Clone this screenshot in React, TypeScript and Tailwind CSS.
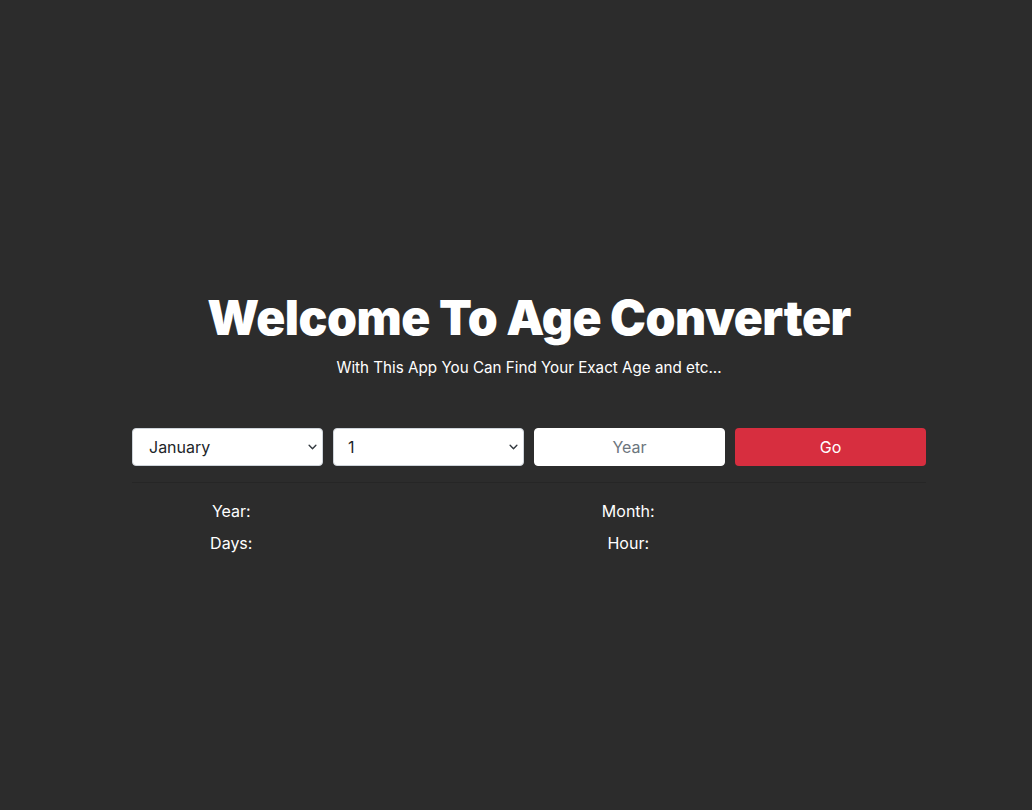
import React from "react";

const months = ["January","February","March","April","May","June","July","August","September","October","November","December"];

function Chevron() {
  return (
    <svg className="pointer-events-none absolute right-[5px] top-1/2 -translate-y-1/2" width="11" height="9" viewBox="0 0 16 16">
      <path d="M2 5l6 6 6-6" fill="none" stroke="#343a40" strokeWidth="2.5" strokeLinecap="round" strokeLinejoin="round" />
    </svg>
  );
}

export default function App() {
  return (
    <div className="min-h-[810px] w-full bg-[#2c2c2c] text-white" style={{ fontFamily: "Inter, 'Noto Sans', sans-serif" }}>
      <div className="ml-[132px] w-[794px] pt-[288px]">
        <h1 className="text-center text-[48px] leading-[60px] font-black tracking-[-0.5px]">Welcome To Age Converter</h1>
        <p className="mt-[8px] text-center text-[15.2px] leading-[24px]">With This App You Can Find Your Exact Age and etc...</p>
        <div className="mt-[48px] grid grid-cols-4 gap-[10px]">
          <div className="relative">
            <select defaultValue="January" className="h-[38px] w-full appearance-none rounded-[4px] border border-[#ced4da] bg-white pl-[16px] text-[16px] text-[#212529] outline-none">
              {months.map((m) => (<option key={m}>{m}</option>))}
            </select>
            <Chevron />
          </div>
          <div className="relative">
            <select defaultValue="1" className="h-[38px] w-full appearance-none rounded-[4px] border border-[#ced4da] bg-white pl-[14px] text-[16px] text-[#212529] outline-none">
              {Array.from({ length: 31 }, (_, i) => (<option key={i}>{i + 1}</option>))}
            </select>
            <Chevron />
          </div>
          <input placeholder="Year" className="h-[38px] w-full rounded-[4px] border border-white bg-white text-center text-[16px] text-[#212529] placeholder:text-[#6c757d] outline-none" />
          <button className="h-[38px] w-full rounded-[4px] bg-[#d72e3f] text-[16px] text-white">Go</button>
        </div>
        <div className="mt-[16px] border-t border-[#262626]" />
        <div className="mt-[16px] grid grid-cols-4 text-[16px] leading-[24px]">
          <div className="text-center">Year:</div>
          <div></div>
          <div className="text-center">Month:</div>
          <div></div>
          <div className="mt-[8px] text-center">Days:</div>
          <div className="mt-[8px]"></div>
          <div className="mt-[8px] text-center">Hour:</div>
          <div className="mt-[8px]"></div>
        </div>
      </div>
    </div>
  );
}
